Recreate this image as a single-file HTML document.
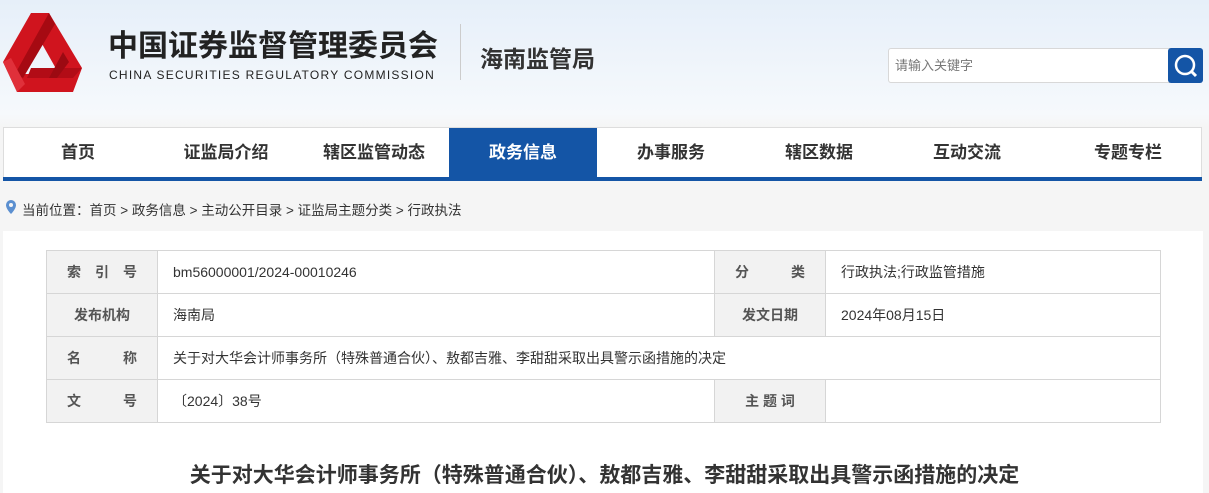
<!DOCTYPE html>
<html><head><meta charset="utf-8"><style>
*{margin:0;padding:0;box-sizing:border-box}
body{width:1209px;height:493px;overflow:hidden;background:#f5f5f5;font-family:"Liberation Sans","Noto Sans CJK SC",sans-serif;position:relative}
.hdr{position:absolute;left:0;top:0;width:1209px;height:127px;background:linear-gradient(#e6eff9,#f6f9fc 90%,#f5f5f5)}
.abs{position:absolute}
.nav{position:absolute;left:3px;top:127px;width:1199px;height:50px;background:#fff;border:1px solid #ddd;border-bottom:none}
.bar{position:absolute;left:3px;top:177px;width:1199px;height:4px;background:#1455a6}
.nav div{position:absolute;top:0;height:50px;line-height:50px;text-align:center;font-size:17px;font-weight:bold;color:#333;width:148px}
.nav .on{background:#1455a6;color:#fff;height:50px}
.panel{position:absolute;left:3px;top:231px;width:1200px;height:262px;background:#fff}
table{position:absolute;left:46px;top:250px;border-collapse:collapse;font-size:14px;color:#333}
td{border:1px solid #d6d6d6;height:43px;padding:0 15px}
td.l{background:#f2f2f2;text-align:center;font-weight:bold;color:#555;width:111px;padding:0}
</style></head><body>
<div class="hdr"></div>
<svg class="abs" style="left:3px;top:12px" width="80" height="82" viewBox="0 0 80 82">
<path fill-rule="evenodd" fill="#d0141e" d="M28,1 L46,1 L79,56 L70,80 L14,80 L0,50 Z M38,30 L56,62 L22,62 Z"/>
<polygon points="46,1 52,12 20,66 12,62" fill="#a60a12"/>
<polygon points="28,56 74,56 79,56 70,66 24,66" fill="#b20c16"/>
<polygon points="60,40 66,50 54,66 46,66" fill="#9c0a12"/>
<polygon points="0,50 8,46 22,72 14,80" fill="#e0303a"/>
</svg>
<div class="abs" style="left:108px;top:21px;font-size:30px;font-weight:bold;color:#222;letter-spacing:0">中国证券监督管理委员会</div>
<div class="abs" style="left:109px;top:68px;font-size:12px;color:#222;letter-spacing:1.25px">CHINA SECURITIES REGULATORY COMMISSION</div>
<div class="abs" style="left:460px;top:24px;width:1px;height:56px;background:#ccc"></div>
<div class="abs" style="left:480px;top:40px;font-size:23px;font-weight:bold;color:#333">海南监管局</div>
<div class="abs" style="left:888px;top:48px;width:282px;height:35px;background:#fff;border:1px solid #d8d8d8;border-radius:3px 0 0 3px;font-size:13px;color:#777;line-height:33px;padding-left:6px">请输入关键字</div>
<div class="abs" style="left:1168px;top:48px;width:35px;height:35px;background:#1455a6;border-radius:3px">
<svg width="35" height="35"><circle cx="17" cy="17" r="9" fill="none" stroke="#fff" stroke-width="2.5"/><line x1="23" y1="23" x2="28" y2="28" stroke="#fff" stroke-width="3"/></svg></div>
<div class="nav">
<div style="left:0">首页</div><div style="left:148px">证监局介绍</div><div style="left:296px">辖区监管动态</div><div class="on" style="left:445px">政务信息</div><div style="left:593px">办事服务</div><div style="left:741px">辖区数据</div><div style="left:889px">互动交流</div><div style="left:1050px">专题专栏</div>
</div>
<div class="bar"></div>
<svg class="abs" style="left:5px;top:199px" width="12" height="16"><path d="M6 1a5 5 0 0 1 5 5c0 4-5 9-5 9s-5-5-5-9a5 5 0 0 1 5-5z" fill="#5b8fd0"/><circle cx="6" cy="6" r="2" fill="#f5f5f5"/></svg>
<div class="abs" style="left:22px;top:199px;font-size:13.5px;color:#333">当前位置：首页 &gt; 政务信息 &gt; 主动公开目录 &gt; 证监局主题分类 &gt; 行政执法</div>
<div class="panel"></div>
<table>
<tr><td class="l">索　引　号</td><td style="width:557px">bm56000001/2024-00010246</td><td class="l">分　　　类</td><td style="width:335px">行政执法;行政监管措施</td></tr>
<tr><td class="l">发布机构</td><td>海南局</td><td class="l">发文日期</td><td>2024年08月15日</td></tr>
<tr><td class="l">名　　　称</td><td colspan="3">关于对大华会计师事务所（特殊普通合伙）、敖都吉雅、李甜甜采取出具警示函措施的决定</td></tr>
<tr><td class="l">文　　　号</td><td>〔2024〕38号</td><td class="l">主 题 词</td><td></td></tr>
</table>
<div class="abs" style="left:0;width:1209px;top:459px;text-align:center;font-size:21px;font-weight:bold;color:#333">关于对大华会计师事务所（特殊普通合伙）、敖都吉雅、李甜甜采取出具警示函措施的决定</div>
</body></html>
